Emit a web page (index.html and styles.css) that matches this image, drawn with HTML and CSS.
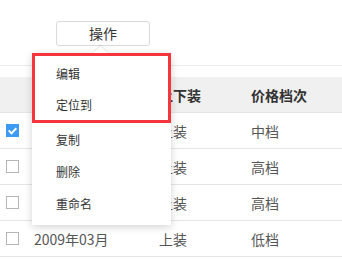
FILE: index.html
```html
<!DOCTYPE html>
<html lang="zh-CN">
<head>
    <meta charset="UTF-8">
    <meta name="viewport" content="width=device-width, initial-scale=1.0">
    <title>操作菜单</title>
    <link rel="stylesheet" href="styles.css">
</head>
<body>
    <div class="toolbar">
        <button class="op-btn" type="button">操作</button>
    </div>
    <div class="grid-wrap">
        <table class="grid">
            <colgroup>
                <col class="c-check">
                <col class="c-date">
                <col class="c-type">
                <col class="c-price">
            </colgroup>
            <thead>
                <tr>
                    <th><span class="box"></span></th>
                    <th></th>
                    <th>上下装</th>
                    <th>价格档次</th>
                </tr>
            </thead>
            <tbody>
                <tr>
                    <td><span class="box checked"></span></td>
                    <td></td>
                    <td>上装</td>
                    <td>中档</td>
                </tr>
                <tr>
                    <td><span class="box"></span></td>
                    <td></td>
                    <td>上装</td>
                    <td>高档</td>
                </tr>
                <tr>
                    <td><span class="box"></span></td>
                    <td></td>
                    <td>上装</td>
                    <td>高档</td>
                </tr>
                <tr>
                    <td><span class="box"></span></td>
                    <td>2009年03月</td>
                    <td>上装</td>
                    <td>低档</td>
                </tr>
            </tbody>
        </table>
    </div>
    <!-- 下拉菜单 -->
    <div class="menu">
        <span class="menu-arrow"></span>
        <div class="menu-group">
            <div class="menu-item">编辑</div>
            <div class="menu-item">定位到</div>
        </div>
        <div class="menu-rest">
            <div class="menu-item">复制</div>
            <div class="menu-item">删除</div>
            <div class="menu-item">重命名</div>
        </div>
    </div>
</body>
</html>
```

FILE: styles.css
```css
body {
    margin: 0;
    font-family: "Noto Sans CJK SC", "Liberation Sans", sans-serif;
    color: #333;
    background: #fff;
    position: relative;
    overflow: hidden;
}
.toolbar {
    height: 65px;
    padding: 20px 0 0 56px;
    box-sizing: border-box;
}
.op-btn {
    width: 94px;
    height: 25px;
    border: 1px solid #d9d9d9;
    border-radius: 3px;
    background: #fff;
    font-family: inherit;
    font-size: 14px;
    line-height: 21px;
    color: #333;
    padding: 0;
}
.grid-wrap {
    border-top: 1px solid #ebebeb;
    padding-top: 11px;
}
.grid {
    width: 342px;
    table-layout: fixed;
    border-collapse: collapse;
}
.c-check { width: 34px; }
.c-date { width: 125px; }
.c-type { width: 92px; }
.grid th, .grid td {
    padding: 0;
    text-align: left;
    font-size: 14px;
    line-height: 20px;
}
.grid th {
    height: 35px;
    background: #f0f0f0;
    font-weight: bold;
    color: #333;
    border-bottom: 1px solid #e6e6e6;
}
.grid td {
    height: 35px;
    color: #555;
    border-bottom: 1px solid #e6e6e6;
}
.grid th:first-child, .grid td:first-child {
    padding-left: 6px;
}
.box {
    display: block;
    width: 11px;
    height: 11px;
    border: 1px solid #b5b5b5;
    background: #fff;
    position: relative;
}
.grid th .box {
    visibility: hidden;
}
.box.checked {
    background: #3d9bf5;
    border-color: #3d9bf5;
}
.box.checked::after {
    content: "";
    position: absolute;
    left: 3px;
    top: 1px;
    width: 3px;
    height: 6px;
    border: solid #fff;
    border-width: 0 2px 2px 0;
    transform: rotate(45deg);
}
.menu {
    position: absolute;
    left: 32px;
    top: 53px;
    width: 139px;
    padding-bottom: 5px;
    background: #fff;
    box-shadow: 0 2px 8px rgba(0, 0, 0, 0.18);
    font-size: 12px;
    color: #333;
}
.menu-arrow {
    position: absolute;
    left: 64px;
    top: -5px;
    width: 9px;
    height: 9px;
    background: #fff;
    transform: rotate(45deg);
    box-shadow: -1px -1px 2px rgba(0, 0, 0, 0.1);
}
.menu-group {
    position: relative;
    border: 3px solid #f5363c;
    padding-top: 2px;
}
.menu-group .menu-item {
    padding-left: 21px;
    height: 31px;
}
.menu-rest {
    padding-top: 1px;
}
.menu-item {
    height: 32px;
    line-height: 32px;
    padding-left: 24px;
}
```
